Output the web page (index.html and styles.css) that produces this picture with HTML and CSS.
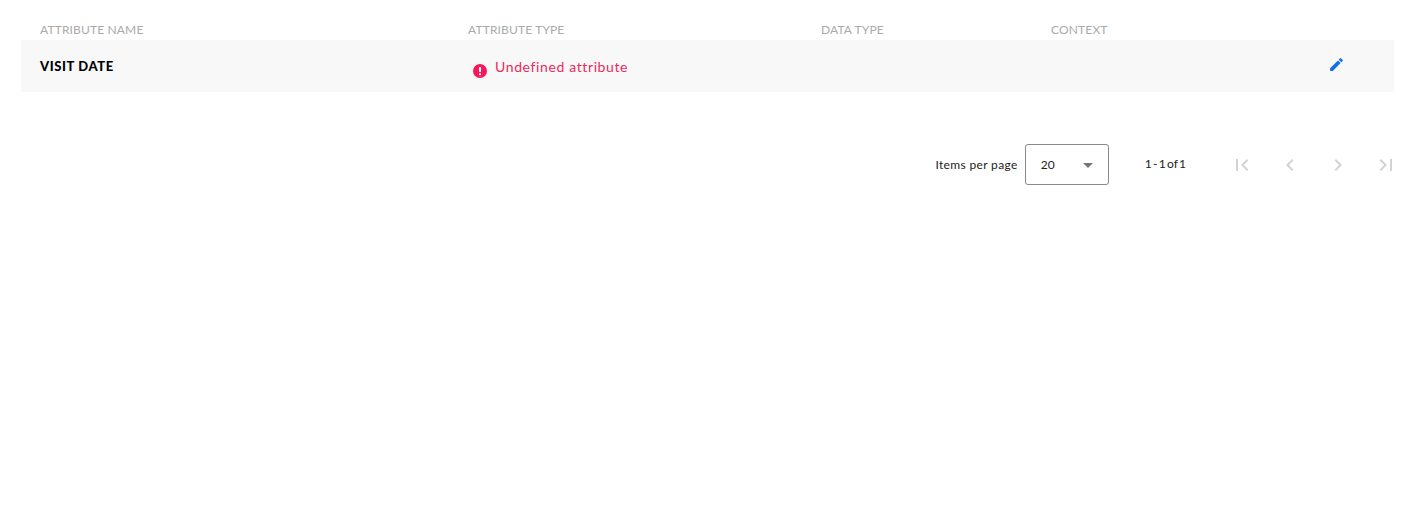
FILE: index.html
```html
<!DOCTYPE html>
<html lang="en">
<head>
<meta charset="utf-8">
<title>Attributes</title>
<link rel="stylesheet" href="styles.css">
</head>
<body>
<main class="page">
  <div class="grid head">
    <div>ATTRIBUTE NAME</div>
    <div>ATTRIBUTE TYPE</div>
    <div>DATA TYPE</div>
    <div>CONTEXT</div>
    <div></div>
  </div>
  <div class="grid row">
    <div class="name">VISIT DATE</div>
    <div class="status">
      <svg class="alert" viewBox="0 0 14 14" aria-hidden="true"><circle cx="7" cy="7" r="7" fill="#f5195a"/><rect x="6" y="3" width="2" height="5" rx=".6" fill="#fff"/><rect x="6" y="9.2" width="2" height="2" rx=".6" fill="#fff"/></svg>
      <span>Undefined attribute</span>
    </div>
    <div></div>
    <div></div>
    <div class="action">
      <svg class="edit" viewBox="0 0 24 24" aria-hidden="true"><path fill="#0f6fe8" d="M3 17.25V21h3.75L17.81 9.94l-3.75-3.75L3 17.25zM20.71 7.04a1 1 0 0 0 0-1.41l-2.34-2.34a1 1 0 0 0-1.41 0l-1.83 1.83 3.75 3.75 1.83-1.83z"/></svg>
    </div>
  </div>
  <nav class="pager">
    <span class="label">Items per page</span>
    <div class="select"><span>20</span><i class="caret"></i></div>
    <span class="range">1 - 1 of 1</span>
    <div class="buttons">
      <svg class="nav" viewBox="0 0 24 24" aria-hidden="true"><path d="M18.41 16.59 13.82 12l4.59-4.59L17 6l-6 6 6 6zM6 6h2v12H6z"/></svg>
      <svg class="nav" viewBox="0 0 24 24" aria-hidden="true"><path d="M15.41 7.41 14 6l-6 6 6 6 1.41-1.41L10.83 12z"/></svg>
      <svg class="nav" viewBox="0 0 24 24" aria-hidden="true"><path d="M10 6 8.59 7.41 13.17 12l-4.58 4.59L10 18l6-6z"/></svg>
      <svg class="nav" viewBox="0 0 24 24" aria-hidden="true"><path d="M5.59 7.41 10.18 12l-4.59 4.59L7 18l6-6-6-6zM16 6h2v12h-2z"/></svg>
    </div>
  </nav>
</main>
</body>
</html>
```
FILE: styles.css
```css
html, body { margin: 0; background: #fff; }
body { font-family: Lato, "Open Sans", sans-serif; color: #000; }
.page { padding: 0 12px 0 21px; }
.grid { display: grid; grid-template-columns: 428px 353px 230px 1fr 85px; padding-left: 19px; align-items: center; }
.head { height: 40px; align-items: end; font-size: 12px; letter-spacing: .15px; color: #aaa; line-height: 20px; box-sizing: border-box; }
.row { height: 52px; background: #f8f8f8; }
.name { font-size: 13px; font-weight: 900; letter-spacing: .6px; }
.status { display: flex; align-items: center; gap: 8px; padding-left: 5px; color: #ea2a5c; font-size: 14px; letter-spacing: .62px; }
.status span { margin-top: 1px; }
.alert { width: 14px; height: 14px; margin-top: 9px; flex: none; }
.action { display: flex; }
.edit { width: 17px; height: 17px; margin-left: 19px; margin-top: -4px; }
.pager { display: flex; justify-content: flex-end; align-items: center; margin-top: 52px; height: 41px; font-size: 12px; color: #222; }
.label { margin-right: 7px; letter-spacing: .35px; }
.select { box-sizing: border-box; width: 84px; height: 41px; border: 1px solid #8a8a8a; border-radius: 3px; display: flex; align-items: center; justify-content: space-between; padding: 0 15px; }
.caret { width: 0; height: 0; border-left: 5px solid transparent; border-right: 5px solid transparent; border-top: 5px solid #757575; margin-top: 1px; }
.range { margin-left: 36px; margin-right: 44px; word-spacing: -1.75px; margin-top: -2px; }
.buttons { display: flex; gap: 24px; margin-right: -4px; }
.nav { width: 24px; height: 24px; fill: #d3d3d3; display: block; }
```
